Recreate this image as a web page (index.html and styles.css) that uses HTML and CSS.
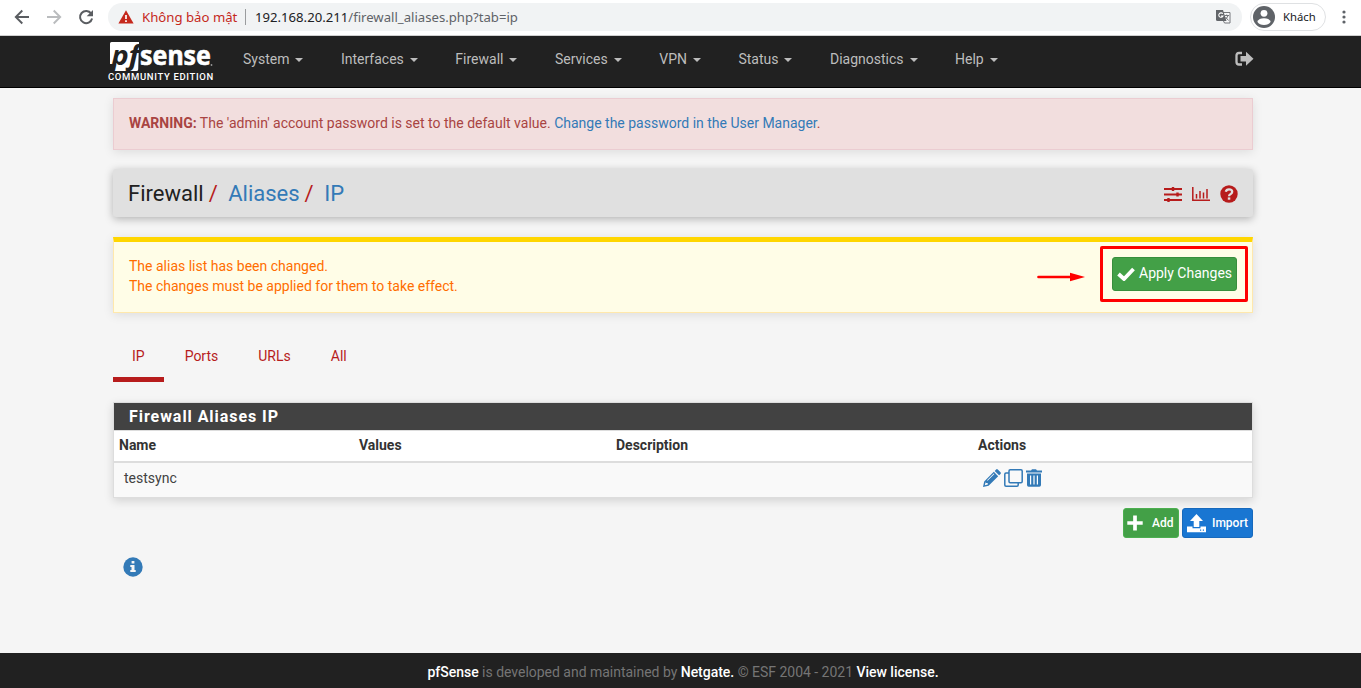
FILE: index.html
```html
<!DOCTYPE html>
<html lang="en">
<head>
<meta charset="utf-8">
<title>Firewall: Aliases: IP</title>
<link rel="stylesheet" href="styles.css">
</head>
<body>
<div class="toolbar">
  <div class="tools">
    <svg width="16" height="16" viewBox="0 0 16 16" fill="none" stroke="#5a5d61" stroke-width="1.9"><path d="M15 8H2M8.3 1.5 1.8 8l6.500 6.500"/></svg>
    <svg width="16" height="16" viewBox="0 0 16 16" fill="none" stroke="#babcbe" stroke-width="1.900"><path d="M1 8h13M7.700 1.500 14.200 8l-6.500 6.500"/></svg>
    <svg width="16" height="16" viewBox="0 0 16 16"><path d="M13.200 4.600A6.100 6.100 0 1 0 14.100 9.500" fill="none" stroke="#5a5d61" stroke-width="2"/><path d="M15 1v6.300H8.700z" fill="#5a5d61"/></svg>
  </div>
  <div class="address">
    <svg class="warn" width="16" height="14" viewBox="0 0 16 14"><path d="M8 .3 15.600 13.500H.4z" fill="#c5281c"/><path d="M8 5v4M8 10.200v1.800" stroke="#fff" stroke-width="1.700"/></svg>
    <span class="insecure">Không bảo mật</span>
    <span class="bar"></span>
    <span class="url"><b>192.168.20.211</b>/firewall_aliases.php?tab=ip</span>
    <svg class="translate" width="15" height="15" viewBox="0 0 15 15"><path d="M5 3.500h9v10.500H8.500L7.500 12" fill="#f7f8f9" stroke="#74777b"/><path d="M0 1h7l3.500 11H1.500Q0 12 0 10.500z" fill="#626569"/><path d="M6.800 4.800A2.200 2.200 0 1 0 7 7H5" fill="none" stroke="#fff" stroke-width="1.100"/><path d="M8.500 6.500H13M10.700 5.500v1M12 6.500Q11.500 9 9.500 10M9.500 8l3 3.500" fill="none" stroke="#74777b"/></svg>
  </div>
  <div class="profile">
    <svg width="22" height="22" viewBox="0 0 22 22"><circle cx="11" cy="11" r="11" fill="#5f6368"/><circle cx="11" cy="7.300" r="3.400" fill="#fff"/><path d="M4.300 15.700Q5.800 12.300 11 12.300t6.700 3.400Q15.500 19 11 19t-6.700-3.300z" fill="#fff"/></svg>
    <span>Khách</span>
  </div>
  <svg class="dots" width="4" height="14" viewBox="0 0 4 14" fill="#5f6368"><circle cx="2" cy="2" r="1.600"/><circle cx="2" cy="7" r="1.600"/><circle cx="2" cy="12" r="1.600"/></svg>
</div>

<nav class="navbar">
  <div class="brand">
    <svg class="logo" width="105" height="31" viewBox="0 0 105 31">
      <path d="M2 2.500Q2 1 3.500 1H31L30.200 28.500Q30 30 28.500 30H5L6.200 23H2z" fill="#fff"/>
      <text class="pf" x="3.500" y="23.500" textLength="28" lengthAdjust="spacingAndGlyphs">pf</text>
      <text class="sense" x="32" y="24" textLength="71" lengthAdjust="spacingAndGlyphs">sense</text>
      <circle cx="103.500" cy="24" r=".9" fill="#999"/>
    </svg>
    <span class="edition">COMMUNITY EDITION</span>
  </div>
  <ul class="menu">
    <li>System<i class="caret"></i></li><li>Interfaces<i class="caret"></i></li><li>Firewall<i class="caret"></i></li><li>Services<i class="caret"></i></li><li>VPN<i class="caret"></i></li><li>Status<i class="caret"></i></li><li>Diagnostics<i class="caret"></i></li><li>Help<i class="caret"></i></li>
  </ul>
  <svg class="logout" width="19" height="16" viewBox="0 0 19 16"><path d="M7 2H4Q1.500 2 1.500 4.500v6.500Q1.500 13.500 4 13.500h3" fill="none" stroke="#bdbdbd" stroke-width="2.300"/><path d="M5.500 5h5.500V.8L18.500 7.800 11 14.800v-4.300H5.500z" fill="#bdbdbd"/></svg>
</nav>

<main class="container">
  <div class="alert danger"><strong>WARNING:</strong> The 'admin' account password is set to the default value. <a>Change the password in the User Manager</a>.</div>

  <header class="crumbs">
    <div class="path"><span>Firewall</span><i>/</i><a>Aliases</a><i>/</i><a>IP</a></div>
    <div class="head-icons">
      <svg width="18" height="16" viewBox="0 0 18 16" fill="none" stroke="#b71c1c"><path d="M0 3h18M0 8.500h18M0 14h18" stroke-width="2"/><path d="M9 1v4M13.500 6.500v4M4.500 12v4" stroke-width="2.400"/></svg>
      <svg width="18" height="16" viewBox="0 0 18 16" fill="none" stroke="#b71c1c"><path d="M.8 1v13.200H18" stroke-width="1.500"/><path d="M4.500 8v4.500M8 5v7.500M11.500 6.500v6M15 3v9.500" stroke-width="1.500"/></svg>
      <svg width="18" height="18" viewBox="0 0 18 18"><circle cx="9" cy="9" r="8.700" fill="#b71c1c"/><path d="M5.800 6.800Q6.300 4.300 9 4.300q3.200 0 3.200 2.500 0 1.300-1.500 2.200Q9 9.900 9 11.200" fill="none" stroke="#e0e0e0" stroke-width="2.300"/><path d="M7.800 12.400h2.500v2.300H7.800z" fill="#e0e0e0"/></svg>
    </div>
  </header>

  <div class="alert notice">
    <div>The alias list has been changed.<br>The changes must be applied for them to take effect.</div>
    <svg class="arrow" width="48" height="10" viewBox="0 0 48 10"><path d="M1.500 5H35" stroke="red" stroke-width="2.600" stroke-linecap="round"/><path d="M33 .7 48 5 33 9.300z" fill="red"/></svg>
    <div class="highlight"><button class="apply"><svg width="18" height="14" viewBox="0 0 18 14"><path d="M1.500 7 7 12 16.500 2" fill="none" stroke="#fff" stroke-width="3.800"/></svg><span>Apply Changes</span></button></div>
  </div>

  <ul class="tabs"><li class="active">IP</li><li>Ports</li><li>URLs</li><li>All</li></ul>

  <section class="panel">
    <h2>Firewall Aliases IP</h2>
    <div class="row heading"><span>Name</span><span>Values</span><span>Description</span><span>Actions</span></div>
    <div class="row entry"><span>testsync</span><span></span><span></span>
      <span class="actions">
        <svg width="18" height="18" viewBox="0 0 18 18" fill="#337ab7"><path fill-rule="evenodd" d="M0 18l1.200-5.600L10.800 2.800l4.400 4.400-9.600 9.600zM2.600 13.300l-.8 3 3-.7-.1-1.600-1.500-.1zM4.600 11.800l6.800-6.800-.6-.6-6.800 6.800z"/><path d="M11.700 1.900l1.400-1.400q.8-.8 1.700 0l2.700 2.700q.8.800 0 1.700l-1.400 1.400z"/></svg>
        <svg width="19" height="18" viewBox="0 0 19 18" fill="none" stroke="#337ab7" stroke-width="1.500"><rect x="5" y=".8" width="13.200" height="13" rx="1.200"/><path d="M5 4H2Q.8 4 .8 5.200V16Q.8 17.200 2 17.200h11Q14.200 17.200 14.200 16v-2"/></svg>
        <svg width="16" height="18" viewBox="0 0 16 18"><path d="M0 1.500h5L6 .3h4l1 1.200h5v2H0zM1 4.500h14V16q0 1.700-1.700 1.700H2.700Q1 17.700 1 16z" fill="#337ab7"/><path d="M4.600 6.500v9M8 6.500v9M11.400 6.500v9" stroke="#fff" stroke-width="1.200"/></svg>
      </span>
    </div>
  </section>

  <div class="buttons">
    <button class="add"><svg width="16" height="16" viewBox="0 0 16 16"><path d="M8 .5v15M.3 8h15.400" stroke="#fff" stroke-width="3.700"/></svg><span>Add</span></button>
    <button class="import"><svg width="19" height="19" viewBox="0 0 19 19" fill="#fff"><path d="M9.500 0 16 7h-3.700v6H6.700V7H3z"/><path d="M0 12.500h5.500v1.800h8v-1.800H19v5.700H0z"/><path d="M13 16.200h1.200M15.800 16.200H17" stroke="#1976d2" stroke-width="1.200"/></svg><span>Import</span></button>
  </div>

  <svg class="info" width="20" height="20" viewBox="0 0 20 20"><circle cx="10" cy="10" r="9.700" fill="#337ab7"/><path d="M8.600 4h2.800v2.400H8.600zM7.300 8h4.200v5h1.200v2H7.300v-2h1.200v-3H7.300z" fill="#f5f5f5"/></svg>
</main>

<footer><span><b>pfSense</b> is developed and maintained by <b>Netgate.</b> © ESF 2004 - 2021 <b>View license.</b></span></footer>
</body>
</html>
```
FILE: styles.css
```css
* { box-sizing: border-box; }
body { margin: 0; min-height: 688px; display: flex; flex-direction: column; background: #f5f5f5; color: #212121; font: 14px/20px Roboto, sans-serif; }
svg { display: block; flex: none; }
ul { list-style: none; margin: 0; padding: 0; }
a { color: #337ab7; }
button { font: inherit; color: #fff; margin: 0; border-radius: 3px; display: flex; align-items: center; white-space: nowrap; }

/* Browser toolbar */
.toolbar { height: 36px; background: #fff; border-bottom: 1px solid #d0d0d0; display: flex; align-items: center; padding: 0 13px 2px 14px; font-family: "Noto Sans", sans-serif; }
.tools { display: flex; gap: 16px; width: 94px; }
.address { width: 1134px; height: 28px; border-radius: 14px; background: #f1f3f4; display: flex; align-items: center; padding: 0 11px 0 10px; }
.insecure { color: #c5281c; margin-left: 8px; font-size: 13.200px; width: 96px; white-space: nowrap; }
.bar { width: 1px; height: 16px; background: #9a9c9e; margin: 0 9px 0 7px; }
.url { color: #5f6368; font-size: 13.150px; }
.url b { font-weight: 400; color: #202124; }
.translate { margin-left: auto; }
.profile { display: flex; align-items: center; width: 76px; height: 28px; border: 1px solid #dfe1e3; border-radius: 14px; margin-left: 8px; padding-left: 2px; gap: 8px; font-size: 11.300px; color: #202124; }
.dots { margin-left: auto; margin-right: 2px; }

/* Main navigation */
.navbar { height: 52px; background: #212121; border-bottom: 1px solid #000; display: flex; padding: 0 107px 0 108px; }
.brand { width: 135px; padding-top: 5px; color: #fff; }
.logo { overflow: visible; }
.pf { font: italic 700 27px "Noto Sans", sans-serif; fill: #212121; }
.sense { font: 700 26.500px "Noto Sans", sans-serif; fill: #fff; stroke: #fff; stroke-width: .6px; }
.edition { display: block; font-size: 9.500px; font-weight: 500; line-height: 10px; letter-spacing: .65px; white-space: nowrap; }
.menu { display: flex; gap: 37.500px; color: #bdbdbd; padding-top: 13px; }
.menu li { display: flex; align-items: center; height: 20px; }
.caret { border: 4px solid transparent; border-top-color: #bdbdbd; border-bottom: 0; margin: 2px 0 0 6px; }
.logout { margin: 15px 0 0 auto; }

.container { width: 1140px; margin: 10px 0 0 113px; flex: 1; }
.alert { box-shadow: 0 2px 10px rgba(0,0,0,.1); }
.danger { height: 52px; padding: 14px 15px; border: 1px solid #ebccd1; background: #f2dede; color: #a94442; }
.danger strong { font-weight: 700; }
.crumbs { height: 48px; margin-top: 19px; background: #e0e0e0; border-radius: 3px; box-shadow: 0 2px 8px rgba(0,0,0,.28); padding: 2px 15px 0; display: flex; align-items: center; justify-content: space-between; font-size: 22px; }
.path { display: flex; }
.path i { color: #b71c1c; font-style: normal; margin: 0 10.500px 0 5px; }
.head-icons { display: flex; align-items: center; gap: 10px; }
.notice { display: flex; height: 76px; margin-top: 20px; border: 1px solid #ffe8ac; border-top: 5px solid #ffd600; background: #fffde7; color: #ff6d00; padding: 4px 4px 0 15px; }
.notice > div:first-child { padding-top: 10px; }
.arrow { margin: 26px 15px 0 auto; }
.highlight { width: 148px; height: 56px; border: 3px solid red; border-radius: 2px; padding: 8px 9px; }
.apply { width: 125px; height: 34px; padding: 0 4px; border: 1px solid #388e3c; background: #43a047; gap: 4px; }
.apply span { padding-bottom: 2px; }

.tabs { display: flex; margin-top: 33px; height: 36px; color: #b71c1c; }
.tabs li { padding: 0 20px; }
.tabs .active { padding: 0 19px; border-bottom: 5px solid #b71c1c; margin-right: 1px; }

.panel { height: 96px; margin-top: 20px; border: 1px solid #ddd; background: #fff; box-shadow: 0 3px 9px rgba(0,0,0,.14); }
h2 { margin: 0; height: 28px; padding: 0 15px; background: #424242; border-bottom: 1px solid #ddd; color: #fff; font-size: 16px; line-height: 27px; font-weight: 700; letter-spacing: .95px; }
.row { display: grid; grid-template-columns: 240px 257px 362px 1fr; padding-left: 5px; }
.heading { height: 32px; border-bottom: 2px solid #ddd; font-weight: 700; line-height: 28px; color: #333; }
.entry { height: 34px; line-height: 30px; background: #f9f9f9; color: #424242; }
.entry > span:first-child { padding-left: 5px; }
.actions { display: flex; align-items: center; gap: 3px; padding-left: 5px; padding-bottom: 4px; }
.buttons { display: flex; justify-content: flex-end; gap: 3px; margin-top: 10px; font-size: 12px; font-weight: 500; }
.buttons button { height: 30px; }
.add { width: 56px; padding: 0 3px; gap: 9px; background: #43a047; border: 1px solid #4caf50; }
.import { width: 71px; padding: 0 4px; gap: 6px; background: #1976d2; border: 1px solid #1769bc; }
.info { margin: 19px 0 0 10px; }

footer { height: 35px; background: #212121; color: #757575; text-align: center; line-height: 38px; padding-left: 5px; letter-spacing: -.02px; }
footer b { color: #fff; font-weight: 500; }
```
